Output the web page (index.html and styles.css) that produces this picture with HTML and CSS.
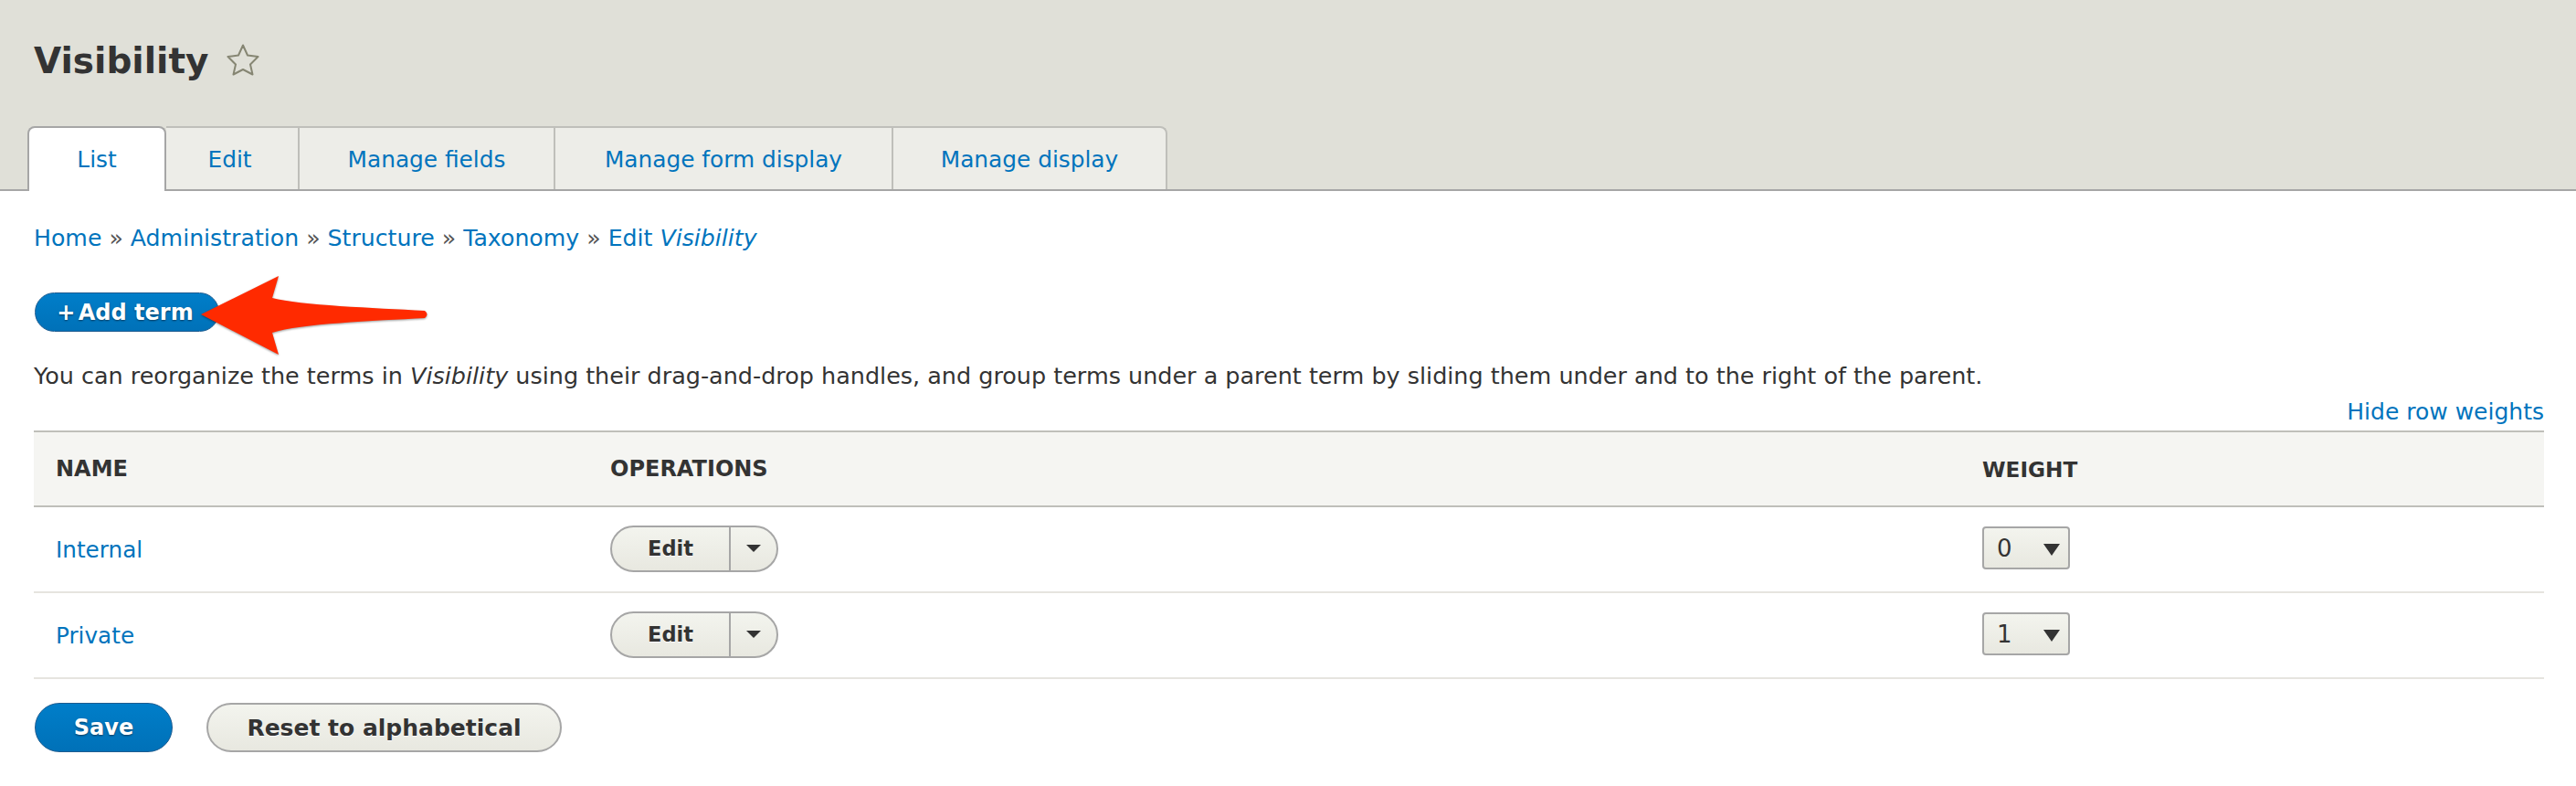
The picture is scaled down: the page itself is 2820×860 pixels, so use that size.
FILE: index.html
```html
<!DOCTYPE html>
<html lang="en">

<head>
  <meta charset="UTF-8">
  <title>Visibility</title>
  <link rel="stylesheet" href="styles.css">
</head>
<body>
  <header class="page-head">
    <h1 class="page-title">
      Visibility
      <svg class="star" viewBox="0 0 36 35" width="36" height="35">
        <polygon points="18,1.5 23,12.5 34.5,14 26,22.5 28.5,33.5 18,28 7.5,33.5 10,22.5 1.5,14 13,12.5" />
      </svg>
    </h1>
    <ul class="tabs">
      <li class="tab tab-active"><a href="#">List</a></li>
      <li class="tab tab-edit"><a href="#">Edit</a></li>
      <li class="tab tab-fields"><a href="#">Manage fields</a></li>
      <li class="tab tab-form"><a href="#">Manage form display</a></li>
      <li class="tab tab-display"><a href="#">Manage display</a></li>
    </ul>
  </header>

  <main class="content">
    <nav class="crumbs">
      <a href="#">Home</a> » <a href="#">Administration</a> » <a href="#">Structure</a> » <a href="#">Taxonomy</a> » <a href="#">Edit <em>Visibility</em></a>
    </nav>

    <div class="actions">
      <a class="btn btn-add" href="#"><span class="plus">+</span> Add term</a>
      <!-- annotation drawn over the page -->
      <svg class="arrow" viewBox="0 0 260 96" width="260" height="96">
        <path d="M1 43 L86 1 L79 25 C110 33 190 36 246 39 Q251 43 246 47 C190 50 110 53 79 63 L86 87 Z" />
      </svg>
    </div>

    <p class="help">You can reorganize the terms in <em>Visibility</em> using their drag-and-drop handles, and group terms under a parent term by sliding them under and to the right of the parent.</p>

    <div class="weights-toggle"><a href="#">Hide row weights</a></div>

    <table class="terms">
      <thead>
        <tr>
          <th class="col-name">Name</th>
          <th class="col-ops">Operations</th>
          <th class="col-weight">Weight</th>
        </tr>
      </thead>
      <tbody>
        <tr>
          <td><a href="#">Internal</a></td>
          <td>
            <div class="dropbutton"><span class="drop-main">Edit</span><span class="drop-toggle"></span></div>
          </td>
          <td>
            <div class="select-wrap"><select><option>0</option></select></div>
          </td>
        </tr>
        <tr>
          <td><a href="#">Private</a></td>
          <td>
            <div class="dropbutton"><span class="drop-main">Edit</span><span class="drop-toggle"></span></div>
          </td>
          <td>
            <div class="select-wrap"><select><option>1</option></select></div>
          </td>
        </tr>
      </tbody>
    </table>

    <div class="form-actions">
      <button class="btn btn-primary">Save</button>
      <button class="btn btn-plain">Reset to alphabetical</button>
    </div>
  </main>
</body>
</html>
```

FILE: styles.css
```css
html,
body {
  margin: 0;
  padding: 0;
  background: #fff;
}

body {
  font-family: "DejaVu Sans", sans-serif;
  font-size: 25.46px;
  color: #333;
  overflow: hidden;
}

a {
  color: #0074bd;
  text-decoration: none;
}

.page-head {
  height: 209px;
  box-sizing: border-box;
  padding: 42px 0 0 30px;
  background: #e0e0d8;
  border-bottom: 2px solid #a6a6a6;
}

.page-title {
  display: flex;
  align-items: center;
  gap: 19px;
  height: 50px;
  margin: 0 0 46px 7px;
  font-size: 39px;
  line-height: 50px;
  font-weight: bold;
}

.star {
  margin-top: -3px;
  fill: none;
  stroke: #868673;
  stroke-width: 2;
  stroke-linejoin: round;
}

.tabs {
  display: flex;
  height: 69px;
  margin: 0;
  padding: 0;
  list-style: none;
  font-size: 24.8px;
}

.tab {
  box-sizing: border-box;
  height: 69px;
  background: #edede8;
  border-top: 2px solid #bfbfba;
  border-right: 2px solid #bfbfba;
  text-align: center;
  line-height: 69px;
}

.tab-active {
  width: 152px;
  height: 71px;
  background: #fff;
  border: 2px solid #a6a6a6;
  border-bottom: 0;
  border-radius: 8px 8px 0 0;
  position: relative;
}

.tab-edit {
  width: 146px;
  padding-right: 5px;
}

.tab-fields { width: 280px; }
.tab-form { width: 370px; }

.tab-display {
  width: 300px;
  border-radius: 0 8px 0 0;
}

.content {
  padding: 0 35px 0 37px;
}

.crumbs {
  height: 30px;
  padding-top: 37px;
  font-size: 25.2px;
  line-height: 30px;
  color: #555;
}

.actions {
  display: flex;
  align-items: center;
  position: relative;
  height: 43px;
  margin-top: 44px;
}

.btn {
  box-sizing: border-box;
  display: inline-block;
  font-family: inherit;
  font-weight: bold;
  text-align: center;
  border-radius: 28px;
}

.btn-add {
  width: 202px;
  height: 43px;
  padding-right: 4px;
  line-height: 42px;
  margin-left: 1px;
  font-size: 24px;
  color: #fff;
  background: linear-gradient(#007ec9, #0071b8);
  border: 1px solid #1e5c90;
  text-shadow: 0 1px 2px rgba(0, 0, 0, 0.5);
}

.plus {
  margin-right: -5px;
}

.arrow {
  position: absolute;
  left: 182px;
  top: -19px;
  fill: #ff2a00;
  filter: drop-shadow(0 1px 1px rgba(0, 0, 0, 0.4));
}

.help {
  margin: 30px 0 0;
  line-height: 36px;
}

.weights-toggle {
  margin-top: 3px;
  height: 36px;
  line-height: 38px;
  text-align: right;
  font-size: 25px;
}

.terms {
  width: 100%;
  border-collapse: collapse;
  table-layout: fixed;
  margin-top: 3px;
}

.terms th {
  height: 80px;
  padding: 0 0 0 24px;
  font-size: 24px;
  text-align: left;
  text-transform: uppercase;
  background: #f5f5f2;
  border-top: 2px solid #bfbfba;
  border-bottom: 2px solid #bfbfba;
}

.terms .col-name { width: 583px; }
.terms .col-ops { width: 1478px; }
.terms .col-weight { font-size: 23.2px; }

.terms td {
  height: 92px;
  padding: 0 0 0 24px;
  font-size: 24.7px;
  border-bottom: 2px solid #e6e4df;
}

.dropbutton {
  display: flex;
  box-sizing: border-box;
  width: 184px;
  height: 51px;
  margin-bottom: 2px;
  border: 2px solid #a6a6a6;
  border-radius: 26px;
  background: linear-gradient(#f3f4ee, #e8e8e0);
  font-size: 22.5px;
  font-weight: bold;
  line-height: 46px;
}

.drop-main {
  width: 130px;
  box-sizing: border-box;
  text-align: center;
  border-right: 2px solid #a6a6a6;
  text-shadow: 0 1px #fff;
}

.drop-toggle {
  flex: 1;
  display: flex;
  align-items: center;
  justify-content: center;
}

.drop-toggle::after {
  content: "";
  border-top: 8px solid #333;
  border-left: 8px solid transparent;
  border-right: 8px solid transparent;
}

.select-wrap {
  position: relative;
  width: 96px;
  height: 47px;
  margin-bottom: 3px;
}

.select-wrap select {
  appearance: none;
  box-sizing: border-box;
  width: 96px;
  height: 47px;
  padding: 0 0 0 14px;
  border: 2px solid #a6a6a6;
  border-radius: 4px;
  background: linear-gradient(#f3f4ee, #e8e8e0);
  font-family: inherit;
  font-size: 26px;
  color: #333;
}

.select-wrap::after {
  content: "";
  position: absolute;
  left: 67px;
  top: 19px;
  border-top: 13px solid #333;
  border-left: 9px solid transparent;
  border-right: 9px solid transparent;
}

.form-actions {
  display: flex;
  gap: 37px;
  margin-top: 26px;
  margin-left: 1px;
}

.form-actions .btn {
  height: 54px;
  font-size: 24px;
  padding: 0;
}

.btn-primary {
  width: 151px;
  color: #fff;
  background: linear-gradient(#007ec9, #0071b8);
  border: 1px solid #1e5c90;
  text-shadow: 0 1px 2px rgba(0, 0, 0, 0.5);
}

.form-actions .btn-plain {
  width: 389px;
  font-size: 25px;
  color: #333;
  background: linear-gradient(#f3f4ee, #e8e8e0);
  border: 2px solid #a6a6a6;
  text-shadow: 0 1px #fff;
}
```
